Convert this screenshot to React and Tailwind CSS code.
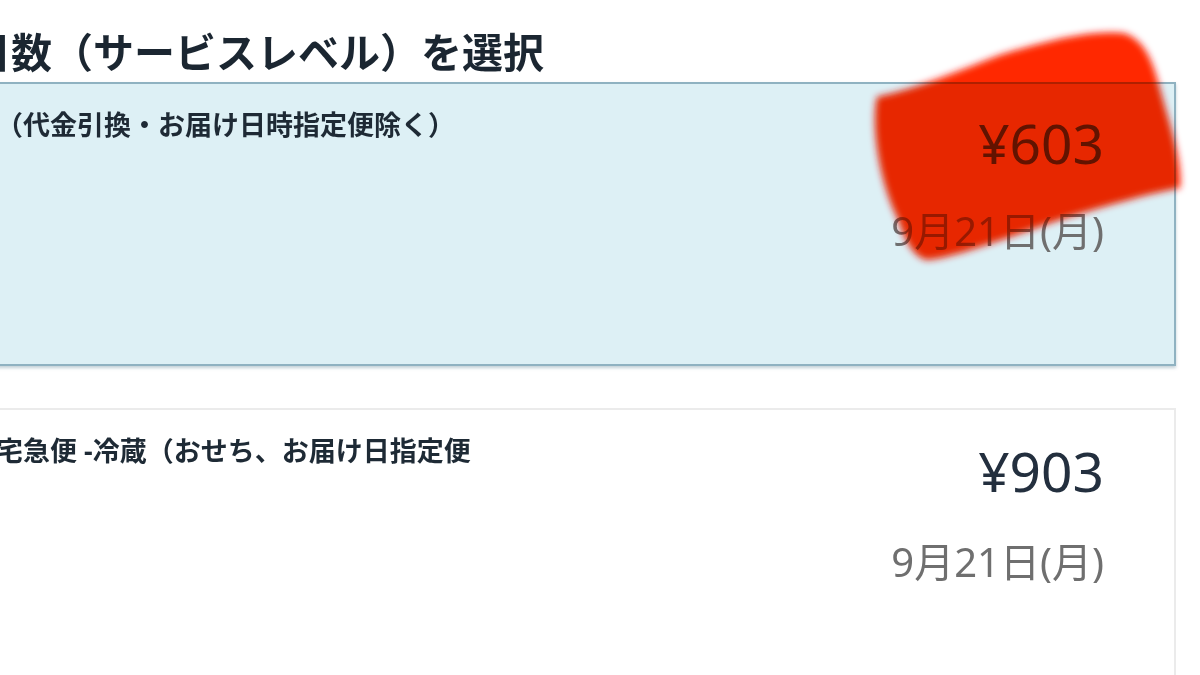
export default function App() {
  const font = { fontFamily: '"Noto Sans", "Noto Sans CJK JP", sans-serif' };
  const blob =
    "M877,97 C871,125 879,180 897,217 C905,240 912,255 926,260 C952,258 992,243 1050,223 C1100,207 1150,193 1180,188 C1183,160 1168,120 1158,82 C1151,55 1141,38 1123,33 C1090,30 1050,40 1000,55 C960,70 920,88 877,97 Z";
  return (
    <div className="relative w-[1200px] h-[675px] overflow-hidden bg-white" style={font}>
      <div className="ml-[-40px] mr-[24px]">
        <h1 className="pl-[10px] pt-[32px] h-[82px] text-[41px] leading-none font-bold text-[#1b2631] whitespace-nowrap">
          日数（サービスレベル）を選択
        </h1>
        <div className="h-[284px] border-2 border-[#8fb2c1] bg-[#ddf0f5] shadow-[0_2px_3px_rgba(80,120,140,0.35)] pt-[25px] pl-[34px] pr-[70px] flex justify-between">
          <div className="text-[27px] leading-[32px] font-bold text-[#1e2a35] whitespace-nowrap">
            （代金引換・お届け日時指定便除く）
          </div>
          <div className="flex flex-col items-end">
            <div className="mt-[6px] text-[55px] leading-none text-[#232f3e]">¥603</div>
            <div className="mt-[41px] text-[40px] leading-none text-[#6f6f6f] whitespace-nowrap">9月21日(月)</div>
          </div>
        </div>
        <div className="mt-[42px] h-[300px] border-2 border-[#ebebeb] bg-white pt-[25px] pl-[34px] pr-[70px] flex justify-between">
          <div className="text-[27px] leading-[32px] font-bold text-[#1e2a35] whitespace-nowrap">
            宅急便 -冷蔵（おせち、お届け日指定便
          </div>
          <div className="flex flex-col items-end">
            <div className="mt-[8px] text-[55px] leading-none text-[#232f3e]">¥903</div>
            <div className="mt-[44px] text-[40px] leading-none text-[#6f6f6f] whitespace-nowrap">9月21日(月)</div>
          </div>
        </div>
      </div>
      <svg className="pointer-events-none absolute inset-0 mix-blend-multiply" width="1200" height="675" viewBox="0 0 1200 675">
        <defs>
          <filter id="soft" x="-10%" y="-10%" width="120%" height="120%">
            <feGaussianBlur stdDeviation="3.5" />
          </filter>
        </defs>
        <path filter="url(#soft)" fill="#ff1c06" d={blob} />
      </svg>
      <svg className="pointer-events-none absolute inset-0 mix-blend-screen" width="1200" height="675" viewBox="0 0 1200 675">
        <defs>
          <filter id="soft2" x="-10%" y="-10%" width="120%" height="120%">
            <feGaussianBlur stdDeviation="3.5" />
          </filter>
        </defs>
        <path filter="url(#soft2)" fill="#480804" d={blob} />
      </svg>
    </div>
  );
}
